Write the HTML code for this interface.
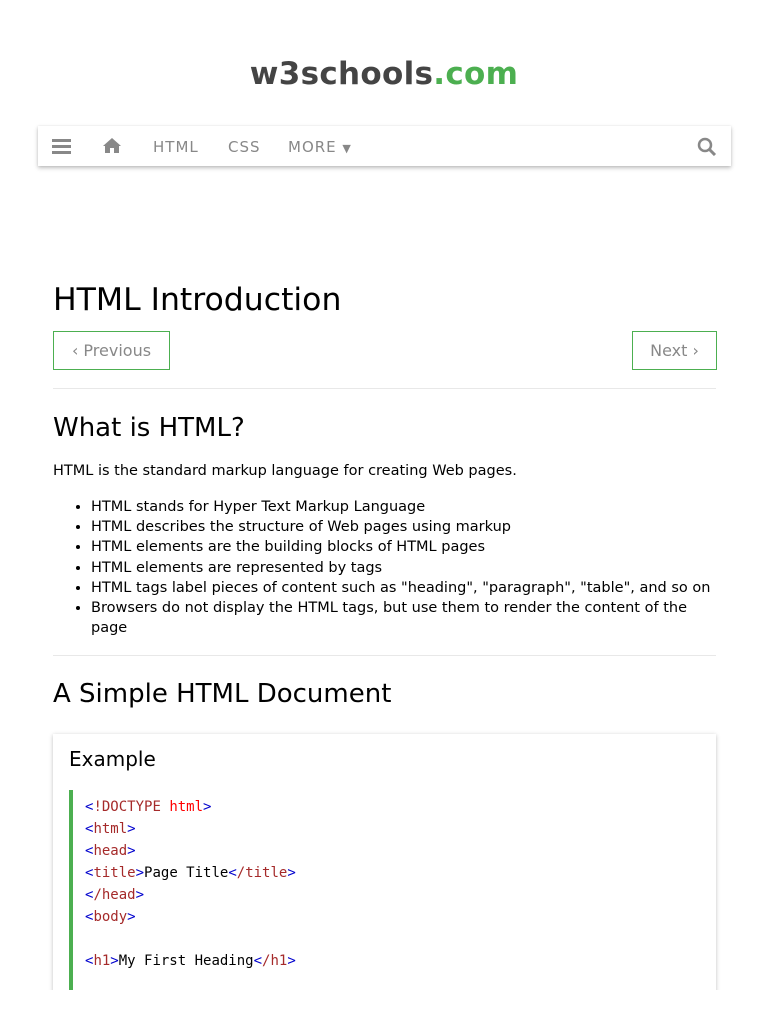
<!DOCTYPE html>
<html><head><style>
body{margin:0;background:#fff;font-family:"DejaVu Sans","Liberation Sans",sans-serif;color:#000;width:768px;height:1024px;overflow:hidden;position:relative}
.abs{position:absolute}
.logo{left:0;width:768px;top:56px;text-align:center;font-size:31px;font-weight:bold;color:#444;letter-spacing:0.3px}
.logo span{color:#4caf50}
.nav{left:38px;top:126px;width:693px;height:40px;box-shadow:0 2px 4px rgba(0,0,0,.25),0 0 2px rgba(0,0,0,.08);background:#fff}
.nav .t{position:absolute;top:12px;font-size:15px;color:#888;letter-spacing:1px}
h1{position:absolute;left:53px;top:281px;margin:0;font-weight:normal;font-size:31.5px;line-height:38px}
.btn{position:absolute;top:331px;height:37px;border:1px solid #4caf50 !important;color:#888;font-size:16px;line-height:37px}
hr{position:absolute;left:53px;width:663px;border:0;border-top:1px solid #e8e8e8;margin:0}
h2{position:absolute;left:53px;margin:0;font-weight:normal;font-size:26px;line-height:32px}
p{position:absolute;left:53px;margin:0;font-size:14.5px}
ul{position:absolute;left:53px;top:497px;margin:0;padding-left:38px;width:620px;font-size:14.5px;line-height:20.2px}
.clip{position:absolute;left:40px;top:720px;width:690px;height:270px;overflow:hidden}
.ex{left:13px;top:14px;width:663px;height:300px;box-shadow:0 1px 4px rgba(0,0,0,.25);background:#fff}
.code{position:absolute;left:16px;top:56px;border-left:4px solid #4caf50;height:240px;padding-left:12px;font-family:"DejaVu Sans Mono","Liberation Mono",monospace;font-size:14px;line-height:22px;padding-top:6px;white-space:pre}
.b{color:#0000cd}.r{color:#a52a2a}.rr{color:#f00}
</style></head><body>
<div class="abs logo">w3schools<span>.com</span></div>
<div class="abs nav">
<svg style="position:absolute;left:14px;top:12px" width="20" height="16"><rect y="1" width="19" height="3" fill="#888"/><rect y="7" width="19" height="3" fill="#888"/><rect y="13" width="19" height="3" fill="#888"/></svg>
<svg style="position:absolute;left:64px;top:11px" width="20" height="17" viewBox="0 0 20 17"><path d="M10 1 L1 9 L3 9 L3 16 L8 16 L8 11 L12 11 L12 16 L17 16 L17 9 L19 9 Z" fill="#888"/></svg>
<div class="t" style="left:115px">HTML</div>
<div class="t" style="left:190px">CSS</div>
<div class="t" style="left:250px">MORE <span style="font-size:11px">▼</span></div>
<svg style="position:absolute;left:659px;top:11px" width="20" height="19"><circle cx="8" cy="8" r="6" stroke="#888" stroke-width="2.5" fill="none"/><line x1="12" y1="12" x2="18" y2="18" stroke="#888" stroke-width="3"/></svg>
</div>
<h1>HTML Introduction</h1>
<div class="btn" style="left:53px;width:115px;text-align:center;border:1px solid #4caf50">‹ Previous</div>
<div class="btn" style="left:632px;width:83px;text-align:center">Next ›</div>
<hr style="top:388px">
<h2 style="top:412px">What is HTML?</h2>
<p style="top:463px">HTML is the standard markup language for creating Web pages.</p>
<ul>
<li>HTML stands for Hyper Text Markup Language</li>
<li>HTML describes the structure of Web pages using markup</li>
<li>HTML elements are the building blocks of HTML pages</li>
<li>HTML elements are represented by tags</li>
<li>HTML tags label pieces of content such as "heading", "paragraph", "table", and so on</li>
<li>Browsers do not display the HTML tags, but use them to render the content of the page</li>
</ul>
<hr style="top:655px">
<h2 style="top:678px">A Simple HTML Document</h2>
<div class="clip">
<div class="abs ex">
<div style="position:absolute;left:16px;top:13px;font-size:20px">Example</div>
<div class="code"><span class="b">&lt;</span><span class="r">!DOCTYPE</span> <span class="rr">html</span><span class="b">&gt;</span>
<span class="b">&lt;</span><span class="r">html</span><span class="b">&gt;</span>
<span class="b">&lt;</span><span class="r">head</span><span class="b">&gt;</span>
<span class="b">&lt;</span><span class="r">title</span><span class="b">&gt;</span>Page Title<span class="b">&lt;</span><span class="r">/title</span><span class="b">&gt;</span>
<span class="b">&lt;</span><span class="r">/head</span><span class="b">&gt;</span>
<span class="b">&lt;</span><span class="r">body</span><span class="b">&gt;</span>

<span class="b">&lt;</span><span class="r">h1</span><span class="b">&gt;</span>My First Heading<span class="b">&lt;</span><span class="r">/h1</span><span class="b">&gt;</span></div>
</div>
</div>
</body></html>
